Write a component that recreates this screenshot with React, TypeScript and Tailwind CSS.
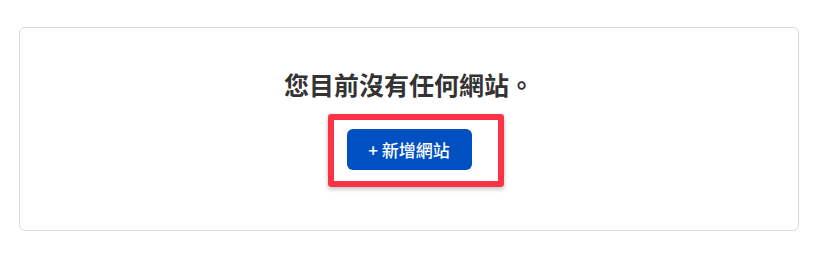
export default function App() {
  return (
    <div className="min-h-[256px] bg-white pt-[27px] font-['Noto_Sans_CJK_TC','Noto_Sans',sans-serif]">
      <div className="ml-[19px] flex w-[780px] flex-col items-center rounded-md border border-[#d9d9d9] pb-[60px] pt-[40px]">
        <h2 className="text-[25px] font-semibold leading-[32px] text-[#333333]">
          您目前沒有任何網站。
        </h2>

        {/* Button with annotation frame on top */}
        <div className="relative mt-[29px]">
          <button className="flex h-[41px] w-[125px] items-center justify-center rounded-md bg-[#0050c2] text-[17px] font-medium text-white">
            + 新增網站
          </button>
          <span className="pointer-events-none absolute -bottom-[17px] -left-[19px] -right-[32px] -top-[15px] rounded-[3px] border-[6px] border-[#ff3347] shadow-[0_2px_4px_rgba(0,0,0,0.25)]" />
        </div>
      </div>
    </div>
  )
}
